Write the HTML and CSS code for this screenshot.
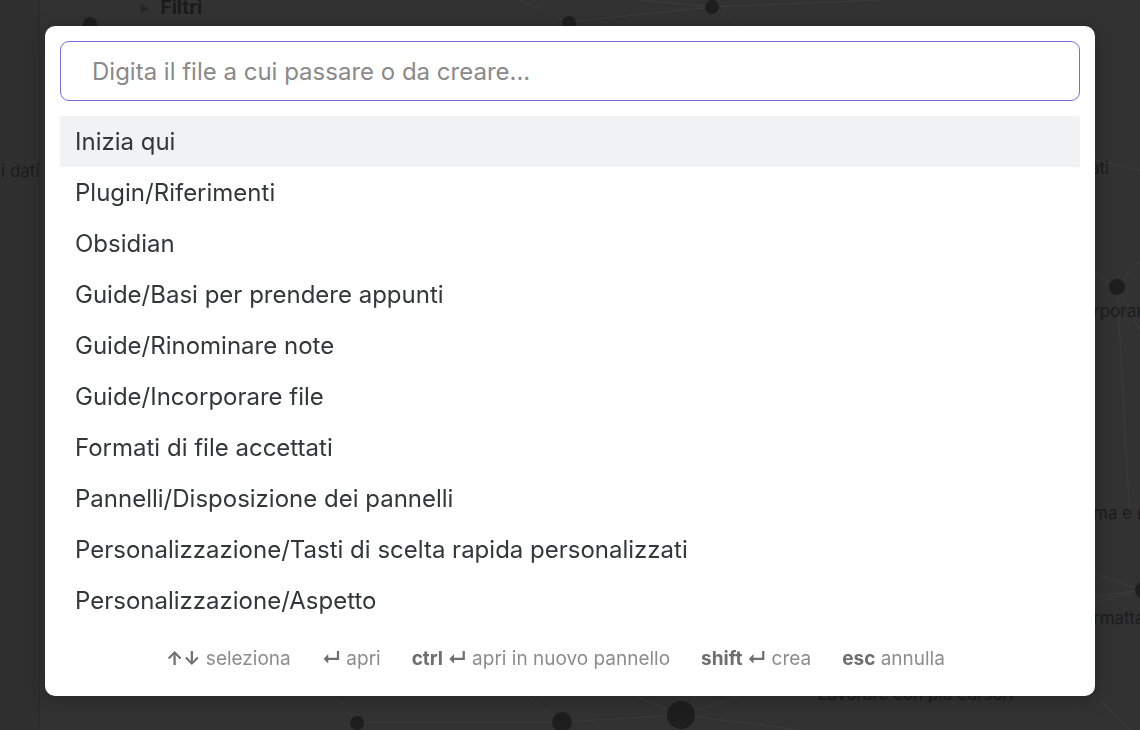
FILE: index.html
```html
<!DOCTYPE html>
<html lang="it">
<head>
<meta charset="utf-8">
<title>Passa al file</title>
<link rel="stylesheet" href="styles.css">
</head>
<body>
<div class="app">
  <aside class="sidebar"></aside>
  <div class="graph">
    <div class="filters"><span class="tri">▶</span><span class="filters-label">Filtri</span></div>
    <svg class="graph-svg" width="1140" height="730" viewBox="0 0 1140 730">
      <g stroke="#3c3c3c" stroke-width="1" fill="none">
        <line x1="569" y1="22" x2="480" y2="120"/>
        <line x1="569" y1="22" x2="520" y2="0"/>
        <line x1="569" y1="22" x2="712" y2="7"/>
        <line x1="712" y1="7" x2="640" y2="0"/>
        <line x1="712" y1="7" x2="880" y2="0"/>
        <line x1="712" y1="7" x2="760" y2="40"/>
        <line x1="1117" y1="287" x2="1140" y2="260"/>
        <line x1="1117" y1="287" x2="1060" y2="250"/>
        <line x1="1117" y1="287" x2="1140" y2="330"/>
        <line x1="1117" y1="287" x2="1130" y2="520"/>
        <line x1="1140" y1="590" x2="1060" y2="560"/>
        <line x1="1140" y1="590" x2="1070" y2="600"/>
        <line x1="1140" y1="590" x2="1070" y2="610"/>
        <line x1="1095" y1="160" x2="1140" y2="170"/>
        <line x1="1100" y1="700" x2="1130" y2="730"/>
        <line x1="357" y1="722" x2="562" y2="722"/>
        <line x1="357" y1="722" x2="330" y2="690"/>
        <line x1="562" y1="722" x2="681" y2="715"/>
        <line x1="562" y1="722" x2="520" y2="690"/>
        <line x1="681" y1="715" x2="620" y2="690"/>
        <line x1="681" y1="715" x2="760" y2="690"/>
        <line x1="681" y1="715" x2="800" y2="730"/>
        <line x1="681" y1="715" x2="700" y2="690"/>
      </g>
      <g fill="#1e1e1e">
        <circle cx="90" cy="24" r="7"/>
        <circle cx="569" cy="23" r="7"/>
        <circle cx="712" cy="7" r="7"/>
        <circle cx="1117" cy="287" r="8"/>
        <circle cx="1144" cy="590" r="9"/>
        <circle cx="357" cy="723" r="7"/>
        <circle cx="562" cy="722" r="10"/>
        <circle cx="681" cy="715" r="14"/>
      </g>
      <g fill="#1c1c1c" font-family="Inter, 'Noto Sans', sans-serif" font-size="17">
        <text x="1" y="177">i dati</text>
        <text x="1090" y="174">ati</text>
        <text x="1093" y="317">rporare</text>
        <text x="1093" y="519">ma e n</text>
        <text x="1093" y="624">rmatta</text>
        <text x="818" y="700">Lavorare con più cursori</text>
      </g>
    </svg>
  </div>
</div>

<div class="overlay">
  <div class="modal">
    <div class="search">
      <input class="search-input" type="text" placeholder="Digita il file a cui passare o da creare...">
    </div>
    <ul class="results">
      <li class="result is-selected">Inizia qui</li>
      <li class="result">Plugin/Riferimenti</li>
      <li class="result">Obsidian</li>
      <li class="result">Guide/Basi per prendere appunti</li>
      <li class="result">Guide/Rinominare note</li>
      <li class="result">Guide/Incorporare file</li>
      <li class="result">Formati di file accettati</li>
      <li class="result">Pannelli/Disposizione dei pannelli</li>
      <li class="result">Personalizzazione/Tasti di scelta rapida personalizzati</li>
      <li class="result">Personalizzazione/Aspetto</li>
    </ul>
    <div class="instructions">
      <span class="instr"><span class="key">↑↓</span> seleziona</span>
      <span class="instr"><span class="key">↵</span> apri</span>
      <span class="instr"><span class="key">ctrl ↵</span> apri in nuovo pannello</span>
      <span class="instr"><span class="key">shift ↵</span> crea</span>
      <span class="instr"><span class="key">esc</span> annulla</span>
    </div>
  </div>
</div>
</body>
</html>
```

FILE: styles.css
```css
* { box-sizing: border-box; }

html, body {
  margin: 0;
  padding: 0;
  width: 1140px;
  height: 730px;
  overflow: hidden;
  font-family: Inter, "Noto Sans", "Liberation Sans", sans-serif;
}

.app {
  position: relative;
  display: flex;
  width: 1140px;
  height: 730px;
  background: #323232;
}

.sidebar {
  width: 40px;
  height: 100%;
  background: #2f2f2f;
  border-right: 1px solid #2b2b2b;
}

.graph {
  position: relative;
  flex: 1;
  height: 100%;
}

.filters {
  position: absolute;
  top: -4px;
  left: 100px;
  display: flex;
  align-items: center;
  gap: 11px;
  color: #1a1a1a;
  font-size: 19px;
  font-weight: 700;
}

.tri {
  font-size: 10px;
  color: #262626;
}

.graph-svg {
  position: absolute;
  left: -40px;
  top: 0;
}

.overlay {
  position: fixed;
  inset: 0;
  display: flex;
  justify-content: center;
  align-items: flex-start;
  padding-top: 26px;
}

.modal {
  width: 1050px;
  background: #ffffff;
  border-radius: 10px;
  padding: 15px 15px 0 15px;
  box-shadow: 0 4px 20px rgba(0, 0, 0, 0.25);
}

.search-input {
  display: block;
  width: 100%;
  height: 60px;
  border: 1px solid #7b6cd9;
  border-radius: 9px;
  padding: 0 31px;
  font-family: inherit;
  font-size: 24px;
  color: #222;
  outline: none;
  background: #fff;
}

.search-input::placeholder {
  color: #8a8a8a;
}

.results {
  list-style: none;
  margin: 15px 0 0 0;
  padding: 0;
}

.result {
  height: 51px;
  line-height: 51px;
  padding: 0 15px;
  font-size: 24px;
  color: #33363a;
  border-radius: 2px;
}

.result.is-selected {
  background: #f1f2f3;
}

.instructions {
  display: flex;
  justify-content: center;
  gap: 31px;
  padding: 22px 29px 26px 0;
  line-height: 22px;
  font-size: 19px;
  color: #8c8c8c;
}

.key {
  font-weight: 700;
  color: #6e6e6e;
}
```
